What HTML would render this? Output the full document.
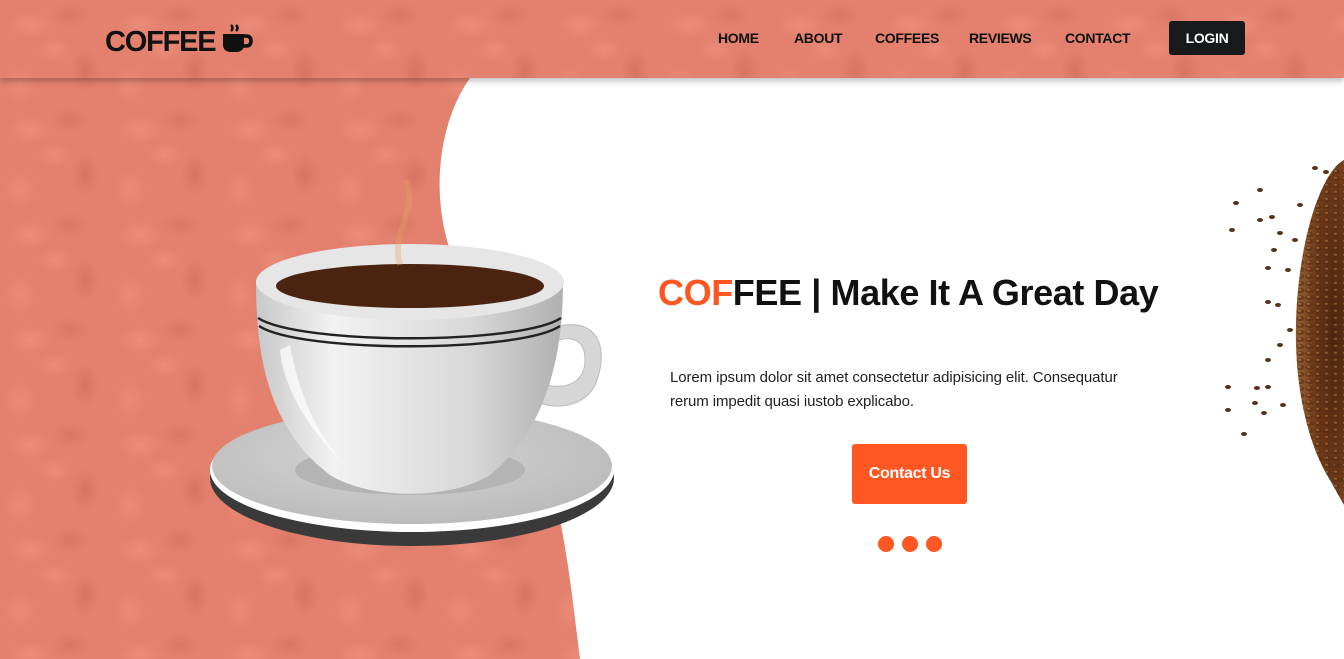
<!DOCTYPE html>
<html><head><meta charset="utf-8"><style>
*{margin:0;padding:0;box-sizing:border-box}
html,body{width:1344px;height:659px;overflow:hidden;background:#fff;font-family:"Liberation Sans","DejaVu Sans",sans-serif}
.tex{background-color:#e3816e;
background-image:
radial-gradient(ellipse 22px 14px at 30px 25px,rgba(240,150,130,.55),transparent 100%),
radial-gradient(ellipse 14px 22px at 85px 70px,rgba(190,90,75,.35),transparent 100%),
radial-gradient(ellipse 20px 13px at 70px 15px,rgba(195,95,80,.3),transparent 100%),
radial-gradient(ellipse 16px 20px at 20px 85px,rgba(240,150,130,.45),transparent 100%),
radial-gradient(ellipse 18px 12px at 55px 50px,rgba(245,160,140,.35),transparent 100%);
background-size:110px 105px}
.bg{position:absolute;left:0;top:0;width:1344px;height:659px}
svg.mask{position:absolute;left:0;top:0}
header{position:absolute;left:0;top:0;width:1344px;height:78px;box-shadow:0 3px 6px rgba(0,0,0,.25);z-index:5}
.logo{position:absolute;left:105px;top:22px;font-size:29px;font-weight:bold;color:#111;letter-spacing:-1.2px}
nav a{position:absolute;top:30px;font-size:14px;font-weight:bold;color:#111;text-decoration:none;letter-spacing:-0.3px}
.login{position:absolute;left:1169px;top:21px;width:76px;height:34px;background:#17191c;color:#fff;font-size:14px;font-weight:bold;text-align:center;line-height:34px;border-radius:3px;letter-spacing:-0.3px}
h1{position:absolute;left:658px;top:272px;font-size:36px;font-weight:bold;color:#111;letter-spacing:-0.4px;white-space:nowrap}
h1 span{color:#fe5722}
p{position:absolute;left:670px;top:366px;width:480px;font-size:15px;line-height:24px;color:#222;letter-spacing:-0.1px}
.btn{position:absolute;left:852px;top:444px;width:115px;height:60px;background:#fe5722;color:#fff;font-weight:bold;font-size:16px;text-align:center;line-height:60px;border-radius:3px;letter-spacing:-0.3px}
.dot{position:absolute;top:536px;width:16px;height:16px;border-radius:50%;background:#fe5722}
</style></head><body>
<div class="bg tex"></div>
<svg class="mask" width="1344" height="659">
<path d="M470 78 C 440 120,430 190,450 250 C 480 340,540 420,560 520 C 570 570,575 620,580 659 L1344 659 L1344 78 Z" fill="#fff"/>
<defs><radialGradient id="pg" cx="0.8" cy="0.5" r="0.7"><stop offset="0" stop-color="#4a230e"/><stop offset="0.6" stop-color="#6a3818"/><stop offset="1" stop-color="#8f5a30"/></radialGradient>
<pattern id="bp" width="9" height="7" patternUnits="userSpaceOnUse"><ellipse cx="4.5" cy="3.5" rx="4" ry="2.6" fill="#5a2d12"/><ellipse cx="3.5" cy="2.8" rx="1.6" ry="1" fill="#b07840"/></pattern></defs>
<path d="M1344 160 C 1325 170,1305 220,1298 290 C 1290 370,1305 440,1330 480 L1344 505 Z" fill="url(#pg)"/>
<path d="M1344 160 C 1325 170,1305 220,1298 290 C 1290 370,1305 440,1330 480 L1344 505 Z" fill="url(#bp)" opacity=".6"/>
<g fill="#5a3018">
<ellipse cx="1236" cy="203" rx="3" ry="2"/><ellipse cx="1260" cy="190" rx="3" ry="2"/><ellipse cx="1232" cy="230" rx="3" ry="2"/><ellipse cx="1260" cy="220" rx="3" ry="2"/><ellipse cx="1272" cy="217" rx="3" ry="2"/><ellipse cx="1280" cy="233" rx="3" ry="2"/><ellipse cx="1274" cy="250" rx="3" ry="2"/><ellipse cx="1268" cy="268" rx="3" ry="2"/><ellipse cx="1278" cy="305" rx="3" ry="2"/><ellipse cx="1268" cy="302" rx="3" ry="2"/><ellipse cx="1268" cy="387" rx="3" ry="2"/><ellipse cx="1228" cy="387" rx="3" ry="2"/><ellipse cx="1257" cy="388" rx="3" ry="2"/><ellipse cx="1255" cy="403" rx="3" ry="2"/><ellipse cx="1228" cy="410" rx="3" ry="2"/><ellipse cx="1264" cy="413" rx="3" ry="2"/><ellipse cx="1283" cy="405" rx="3" ry="2"/><ellipse cx="1244" cy="434" rx="3" ry="2"/><ellipse cx="1315" cy="168" rx="3" ry="2"/><ellipse cx="1326" cy="172" rx="3" ry="2"/><ellipse cx="1338" cy="465" rx="3" ry="2"/><ellipse cx="1340" cy="480" rx="3" ry="2"/><ellipse cx="1268" cy="360" rx="3" ry="2"/><ellipse cx="1280" cy="345" rx="3" ry="2"/><ellipse cx="1290" cy="330" rx="3" ry="2"/><ellipse cx="1288" cy="270" rx="3" ry="2"/><ellipse cx="1295" cy="240" rx="3" ry="2"/><ellipse cx="1300" cy="205" rx="3" ry="2"/>
</g>
<defs>
<linearGradient id="cg" x1="0" x2="1"><stop offset="0" stop-color="#c8c8c8"/><stop offset="0.25" stop-color="#f2f2f2"/><stop offset="0.7" stop-color="#d8d8d8"/><stop offset="1" stop-color="#b0b0b0"/></linearGradient>
<radialGradient id="sg" cx="0.45" cy="0.4" r="0.6"><stop offset="0" stop-color="#d5d5d5"/><stop offset="1" stop-color="#bcbcbc"/></radialGradient>
</defs>
<ellipse cx="412" cy="478" rx="202" ry="68" fill="#3a3a3a"/>
<ellipse cx="412" cy="470" rx="202" ry="62" fill="#fff"/>
<ellipse cx="412" cy="466" rx="200" ry="58" fill="url(#sg)"/>
<ellipse cx="410" cy="470" rx="115" ry="25" fill="#b4b4b4"/>
<path d="M545 330 C 600 310,610 350,595 385 C 585 405,560 410,540 403 L 545 385 C 570 390,585 380,585 360 C 585 335,565 335,548 345 Z" fill="#d6d6d6" stroke="#bbb"/>
<path d="M256 282 C 256 360,270 430,330 475 C 370 500,450 500,490 475 C 545 430,563 360,563 282 Z" fill="url(#cg)"/>
<ellipse cx="410" cy="282" rx="154" ry="38" fill="#e6e6e6"/>
<ellipse cx="410" cy="286" rx="134" ry="22" fill="#4a2410"/>
<path d="M258 318 C 300 345,520 345,561 318" stroke="#222" stroke-width="2.5" fill="none"/>
<path d="M259 326 C 300 353,520 353,560 326" stroke="#222" stroke-width="2.5" fill="none"/>
<path d="M290 345 C 300 400,320 440,350 470 C 320 440,285 400,280 350 Z" fill="#fff" opacity=".7"/>
<path d="M400 265 C 390 230,420 210,405 180" stroke="#e8a060" stroke-width="6" fill="none" opacity=".35"/>
</svg>
<header class="tex">
<div class="logo">COFFEE <svg width="34" height="34" viewBox="0 0 34 34" style="vertical-align:-5px;margin-left:-2px"><path d="M11 3 q3 3 0 6 M16 3 q3 3 0 6" stroke="#111" stroke-width="2.5" fill="none"/><path d="M3 12 h21 v10 q0 8 -8 8 h-5 q-8 0 -8 -8 Z" fill="#111"/><path d="M24 14 h2 q5 0 5 5 q0 5 -5 5 h-3" stroke="#111" stroke-width="3.5" fill="none"/></svg></div>
<nav><a style="left:718px">HOME</a><a style="left:794px">ABOUT</a><a style="left:875px">COFFEES</a><a style="left:969px">REVIEWS</a><a style="left:1065px">CONTACT</a></nav>
<div class="login">LOGIN</div>
</header>
<h1><span>COF</span>FEE | Make It A Great Day</h1>
<p>Lorem ipsum dolor sit amet consectetur adipisicing elit. Consequatur rerum impedit quasi iustob explicabo.</p>
<div class="btn">Contact Us</div>
<div class="dot" style="left:878px"></div><div class="dot" style="left:902px"></div><div class="dot" style="left:926px"></div>
</body></html>
